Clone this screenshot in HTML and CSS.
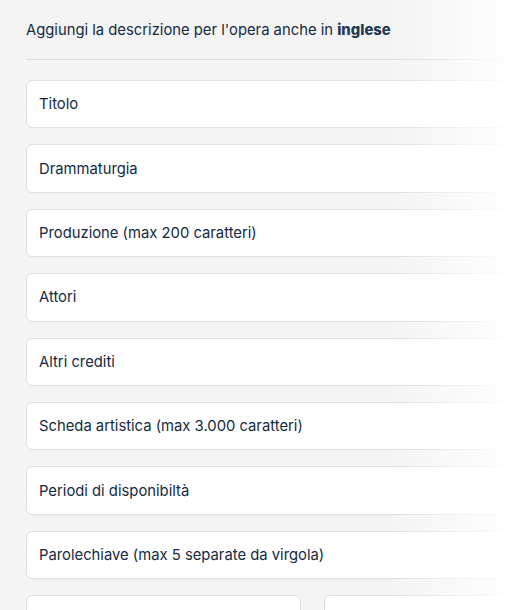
FILE: index.html
```html
<!DOCTYPE html>
<html lang="it">
<head>
<meta charset="utf-8">
<title>Descrizione in inglese</title>
<link rel="stylesheet" href="styles.css">
</head>
<body>
<main class="page">
  <p class="intro">Aggiungi la descrizione per l'opera anche in <strong>inglese</strong></p>
  <hr class="divider">
  <form class="fields">
    <label class="field"><input type="text" placeholder="Titolo"></label>
    <label class="field"><input type="text" placeholder="Drammaturgia"></label>
    <label class="field"><input type="text" placeholder="Produzione (max 200 caratteri)"></label>
    <label class="field"><input type="text" placeholder="Attori"></label>
    <label class="field"><input type="text" placeholder="Altri crediti"></label>
    <label class="field"><input type="text" placeholder="Scheda artistica (max 3.000 caratteri)"></label>
    <label class="field"><input type="text" placeholder="Periodi di disponibiltà"></label>
    <label class="field"><input type="text" placeholder="Parolechiave (max 5 separate da virgola)"></label>
    <div class="pair">
      <label class="field"><input type="text"></label>
      <label class="field"><input type="text"></label>
    </div>
  </form>
  <div class="fade" aria-hidden="true"></div>
</main>
</body>
</html>
```
FILE: styles.css
```css
html, body {
  margin: 0;
  padding: 0;
  background: #f4f4f4;
}
body {
  font-family: Inter, "Noto Sans", sans-serif;
  color: #152a40;
}
.page {
  position: relative;
  height: 610px;
  padding-left: 26px;
  overflow: hidden;
}
.intro {
  margin: 0;
  padding-top: 21px;
  font-size: 14.8px;
  line-height: 18px;
}
.intro strong {
  font-weight: 800;
  color: #1e3a55;
}
.divider {
  margin: 20px -40px 0 0;
  border: 0;
  border-top: 1.5px solid #dcdcdc;
  height: 0;
}
.fields {
  display: flex;
  flex-direction: column;
  gap: 16px;
  margin: 20px -40px 0 0;
}
.field {
  display: block;
}
.field input {
  display: block;
  width: 100%;
  box-sizing: border-box;
  height: 48.4px;
  padding: 0 12px;
  border: 1px solid #dcdfe4;
  border-radius: 6px;
  background: #fff;
  font-family: inherit;
  font-size: 14.8px;
  color: #152a40;
  outline: none;
}
.field input::placeholder {
  color: #152a40;
  opacity: 1;
}
.pair {
  display: grid;
  grid-template-columns: 275px 1fr;
  gap: 23px;
}
.fade {
  position: absolute;
  top: 0;
  right: 0;
  width: 134px;
  height: 100%;
  background: linear-gradient(to right, rgba(255,255,255,0), #fff 95%);
  pointer-events: none;
}
```
